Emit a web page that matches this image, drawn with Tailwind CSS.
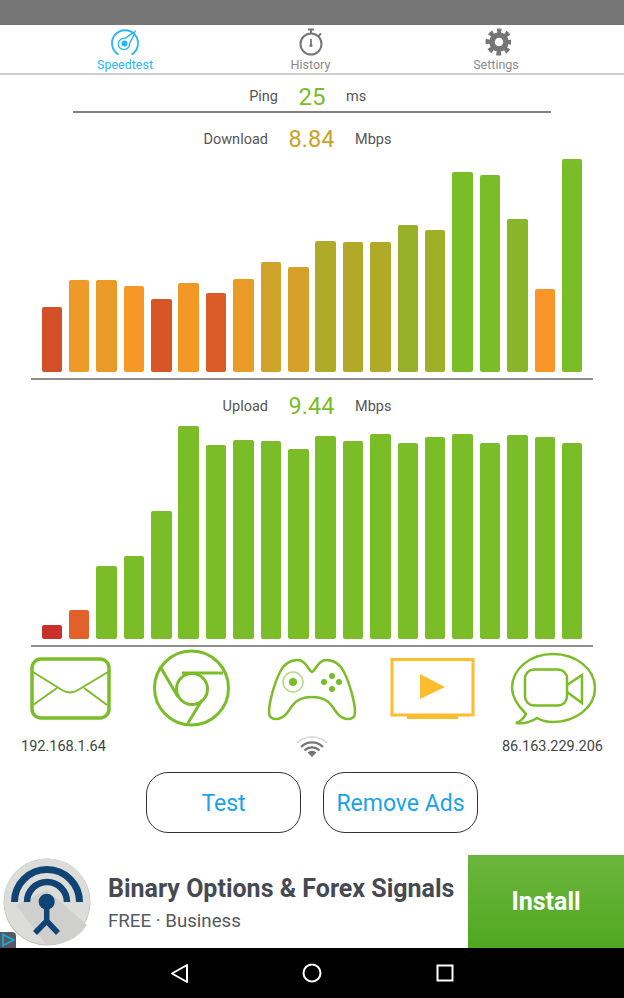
<!DOCTYPE html>
<html lang="en">
<head>
    <meta charset="UTF-8">
    <meta name="viewport" content="width=device-width, initial-scale=1.0">
    <title>Speedtest</title>
    <script src="https://cdn.jsdelivr.net/npm/@tailwindcss/browser@4"></script>
</head>
<body class="bg-white font-['Roboto',sans-serif]">
<div class="relative flex flex-col w-[624px] h-[998px] overflow-hidden bg-white">
    <!-- status bar -->
    <div class="h-[25px] bg-[#757575]"></div>

    <!-- tabs -->
    <div class="flex h-[50px] pl-[32px] border-b-2 border-[#cfcfcf] text-[12.5px] leading-[14px]">
        <div class="flex flex-col items-center w-[186px] pt-[3px] text-[#29b6f6]">
            <svg class="w-[30px] h-[29px]" viewBox="0 0 30 29" fill="none" stroke="#29b6f6">
                <path d="M8.5 26.5A13 13 0 1 1 21.5 26.5" stroke-width="1.8"/>
                <path d="M15 10.5C19 7.5 23 5 25 3.5C24 7 21.5 12 19.5 15.5A5.6 5.6 0 1 1 15 10.5Z" stroke-width="1.4"/>
                <circle cx="14.5" cy="15.5" r="3" fill="#29b6f6" stroke="none"/>
            </svg>
            <span class="mt-[1px]">Speedtest</span>
        </div>
        <div class="flex flex-col items-center w-[185px] pt-[3px] text-[#8a8a8a]">
            <svg class="w-[30px] h-[29px]" viewBox="0 0 30 29" fill="none" stroke="#757575">
                <circle cx="15" cy="16" r="10.5" stroke-width="2"/>
                <path d="M15 6V2M12 1.5H18M22.5 8L25 5.5" stroke-width="2"/>
                <path d="M15 11V17" stroke-width="1.8"/>
                <circle cx="15" cy="17.5" r="1.6" fill="#757575" stroke="none"/>
            </svg>
            <span class="mt-[1px]">History</span>
        </div>
        <div class="flex flex-col items-center w-[186px] pt-[3px] text-[#8a8a8a]">
            <svg class="w-[30px] h-[29px]" viewBox="0 0 30 29" fill="none" stroke="#757575">
                <circle cx="18" cy="14" r="7" stroke-width="5.5"/>
                <circle cx="18" cy="14" r="11" stroke-width="5" stroke-dasharray="4.6 4.04" transform="rotate(-90 18 14)" stroke-dashoffset="2.3"/>
            </svg>
            <span class="mt-[1px]">Settings</span>
        </div>
    </div>

    <!-- ping -->
    <div class="flex items-center h-[36px] pt-[8px] text-[14.5px] text-[#555555]">
        <span class="w-[278px] text-right">Ping</span>
        <span class="w-[68px] text-center text-[24px] text-[#7bbd28]">25</span>
        <span>ms</span>
    </div>
    <div class="h-[2px] mx-[73px] w-[478px] bg-[#808080]"></div>

    <!-- download -->
    <div class="flex items-center h-[37px] pt-[17px] text-[14.5px] text-[#555555]">
        <span class="w-[268px] text-right">Download</span>
        <span class="w-[87px] text-center text-[23.5px] text-[#c9a227]">8.84</span>
        <span>Mbps</span>
    </div>
    <div class="flex items-end justify-between h-[222px] ml-[41.5px] w-[541px]">
        <div class="w-[20.5px] h-[65.5px] rounded-[2px] bg-[#d34f27]"></div>
        <div class="w-[20.5px] h-[92px] rounded-[2px] bg-[#ec9a28]"></div>
        <div class="w-[20.5px] h-[92.5px] rounded-[2px] bg-[#ea9a27]"></div>
        <div class="w-[20.5px] h-[86px] rounded-[2px] bg-[#f69727]"></div>
        <div class="w-[20.5px] h-[73px] rounded-[2px] bg-[#d65627]"></div>
        <div class="w-[20.5px] h-[89px] rounded-[2px] bg-[#f39827]"></div>
        <div class="w-[20.5px] h-[79.5px] rounded-[2px] bg-[#dc5c28]"></div>
        <div class="w-[20.5px] h-[93.5px] rounded-[2px] bg-[#e99b28]"></div>
        <div class="w-[20.5px] h-[110px] rounded-[2px] bg-[#cfa22a]"></div>
        <div class="w-[20.5px] h-[105px] rounded-[2px] bg-[#d7a028]"></div>
        <div class="w-[20.5px] h-[131.5px] rounded-[2px] bg-[#afaa28]"></div>
        <div class="w-[20.5px] h-[130px] rounded-[2px] bg-[#b2a928]"></div>
        <div class="w-[20.5px] h-[130.5px] rounded-[2px] bg-[#b0aa28]"></div>
        <div class="w-[20.5px] h-[147.5px] rounded-[2px] bg-[#98b028]"></div>
        <div class="w-[20.5px] h-[142px] rounded-[2px] bg-[#a0af28]"></div>
        <div class="w-[20.5px] h-[200px] rounded-[2px] bg-[#7bbd28]"></div>
        <div class="w-[20.5px] h-[197px] rounded-[2px] bg-[#7bbd28]"></div>
        <div class="w-[20.5px] h-[153px] rounded-[2px] bg-[#8ab52a]"></div>
        <div class="w-[20.5px] h-[83px] rounded-[2px] bg-[#fc9527]"></div>
        <div class="w-[20.5px] h-[213px] rounded-[2px] bg-[#7bbd28]"></div>
    </div>
    <div class="h-[2px] mt-[6px] ml-[31px] w-[562px] bg-[#8f8f8f]"></div>

    <!-- upload -->
    <div class="flex items-center h-[40px] pt-[14px] text-[14.5px] text-[#555555]">
        <span class="w-[268px] text-right">Upload</span>
        <span class="w-[87px] text-center text-[23.5px] text-[#7bbd28]">9.44</span>
        <span>Mbps</span>
    </div>
    <div class="flex items-end justify-between h-[219px] ml-[41.5px] w-[541px]">
        <div class="w-[20.5px] h-[14px] rounded-[2px] bg-[#c9302c]"></div>
        <div class="w-[20.5px] h-[29px] rounded-[2px] bg-[#e2602a]"></div>
        <div class="w-[20.5px] h-[73px] rounded-[2px] bg-[#7bbd28]"></div>
        <div class="w-[20.5px] h-[83px] rounded-[2px] bg-[#7bbd28]"></div>
        <div class="w-[20.5px] h-[128px] rounded-[2px] bg-[#7bbd28]"></div>
        <div class="w-[20.5px] h-[213px] rounded-[2px] bg-[#7bbd28]"></div>
        <div class="w-[20.5px] h-[194px] rounded-[2px] bg-[#7bbd28]"></div>
        <div class="w-[20.5px] h-[199px] rounded-[2px] bg-[#7bbd28]"></div>
        <div class="w-[20.5px] h-[198px] rounded-[2px] bg-[#7bbd28]"></div>
        <div class="w-[20.5px] h-[190px] rounded-[2px] bg-[#7bbd28]"></div>
        <div class="w-[20.5px] h-[203px] rounded-[2px] bg-[#7bbd28]"></div>
        <div class="w-[20.5px] h-[198px] rounded-[2px] bg-[#7bbd28]"></div>
        <div class="w-[20.5px] h-[205px] rounded-[2px] bg-[#7bbd28]"></div>
        <div class="w-[20.5px] h-[196px] rounded-[2px] bg-[#7bbd28]"></div>
        <div class="w-[20.5px] h-[202px] rounded-[2px] bg-[#7bbd28]"></div>
        <div class="w-[20.5px] h-[205px] rounded-[2px] bg-[#7bbd28]"></div>
        <div class="w-[20.5px] h-[196px] rounded-[2px] bg-[#7bbd28]"></div>
        <div class="w-[20.5px] h-[204px] rounded-[2px] bg-[#7bbd28]"></div>
        <div class="w-[20.5px] h-[202px] rounded-[2px] bg-[#7bbd28]"></div>
        <div class="w-[20.5px] h-[196px] rounded-[2px] bg-[#7bbd28]"></div>
    </div>
    <div class="h-[2px] mt-[6px] ml-[31px] w-[562px] bg-[#8f8f8f]"></div>

    <!-- app icons, one drawing with the page's x/y so they line up -->
    <svg class="w-[624px] h-[80px]" viewBox="0 647 624 80" fill="none" stroke="#7bbd28">
        <rect x="32" y="659" width="77" height="59" rx="9" stroke-width="3.5"/>
        <path d="M33 672L62 690Q70 695 78 690L108 672M33 705L57 688M107 705L84 688" stroke-width="2"/>
        <circle cx="191.500" cy="688" r="37" stroke-width="3"/>
        <circle cx="192" cy="689" r="15.500" stroke-width="3"/>
        <path d="M161 668L178 697M182 673H223M202 700L188 723" stroke-width="3"/>
        <path d="M312 672C308 670 306 660 298 660C290 660 284 664 280 672C274 684 269 703 269 712C269 717 272 719 276 719C284 719 288 712 292 706C296 700 302 697 312 697C322 697 328 700 332 706C336 712 340 719 348 719C352 719 355 717 355 712C355 703 350 684 344 672C340 664 334 660 326 660C318 660 316 670 312 672Z" stroke-width="2.500"/>
        <circle cx="293" cy="682" r="10" stroke="#b5d98a" stroke-width="1.500"/>
        <circle cx="293" cy="682" r="4" fill="#7bbd28" stroke="none"/>
        <g fill="#7bbd28" stroke="none">
            <circle cx="332" cy="676" r="3"/>
            <circle cx="324" cy="682" r="3"/>
            <circle cx="339" cy="682" r="3"/>
            <circle cx="332" cy="689" r="3"/>
        </g>
        <rect x="392" y="659.500" width="81" height="55.500" stroke="#fdbd2c" stroke-width="3"/>
        <path d="M407 715H458V719H407ZM420 674L445 687L420 699Z" fill="#fdbd2c" stroke="none"/>
        <path d="M526 714C518 706 512 698 512 688C512 669 530 654 553 654C576 654 595 669 595 688C595 707 576 722 553 722C547 722 542 721 537 718C531 722 524 724 516 723C521 721 524 718 526 714Z" stroke-width="2.500"/>
        <rect x="525" y="669.500" width="42" height="36" rx="9" stroke-width="2.500"/>
        <path d="M567 685L582 675V703L567 692" stroke-width="2.500"/>
    </svg>

    <!-- addresses -->
    <div class="grid grid-cols-3 items-center h-[38px] px-[21px] text-[14.5px] text-[#444444]">
        <span class="pt-[2px]">192.168.1.64</span>
        <svg class="justify-self-center w-[34px] h-[24px]" viewBox="0 0 34 24" fill="none">
            <path d="M2 9A21 21 0 0 1 32 9" stroke="#d8d8d8" stroke-width="1.500"/>
            <path d="M6 13A15.500 15.500 0 0 1 28 13" stroke="#757575" stroke-width="2.200"/>
            <path d="M9.500 16.500A10.500 10.500 0 0 1 24.500 16.500" stroke="#757575" stroke-width="2.200"/>
            <path d="M17 23L12.500 18.500A6.400 6.400 0 0 1 21.500 18.500Z" fill="#757575"/>
        </svg>
        <span class="pt-[2px] text-right">86.163.229.206</span>
    </div>

    <!-- buttons -->
    <div class="flex justify-center gap-[22px] mt-[7px]">
        <button class="w-[155px] h-[61px] pt-[4px] rounded-[22px] border border-[#333333] text-[23px] text-[#1ba3e8]">Test</button>
        <button class="w-[155px] h-[61px] pt-[4px] rounded-[22px] border border-[#333333] text-[23px] text-[#1ba3e8]">Remove Ads</button>
    </div>

    <!-- ad -->
    <div class="relative flex h-[93px] mt-[22px]">
        <svg class="w-[94px] h-[93px]" viewBox="0 855 94 93" fill="none">
            <circle cx="47" cy="902" r="43.500" fill="#bdbdbb"/>
            <circle cx="47" cy="901.500" r="43" fill="#dcdcd9"/>
            <path d="M16 905L47 890L87 925A43 43 0 0 1 46 944.500Z" fill="#cfd0cd"/>
            <path d="M14.500 902A32.500 32.500 0 0 1 79.500 902" stroke="#0f4475" stroke-width="7"/>
            <path d="M27 902A20 20 0 0 1 67 902" stroke="#0f4475" stroke-width="6.500"/>
            <circle cx="46.700" cy="901.700" r="8" fill="#0f4475"/>
            <path d="M46.700 905V921M35 933L46.700 921L58 933" stroke="#0f4475" stroke-width="5.500"/>
        </svg>
        <div class="flex flex-col w-[374px] pl-[14px]">
            <span class="mt-[16px] text-[25px] leading-[36px] font-bold text-[#454a52] whitespace-nowrap">Binary Options &amp; Forex Signals</span>
            <span class="mt-[2px] text-[18.7px] leading-[24px] text-[#555a60]">FREE · Business</span>
        </div>
        <div class="flex items-center justify-center flex-1 bg-gradient-to-b from-[#6cb53d] to-[#4fa81f] text-[25px] font-bold text-white">Install</div>
        <div class="absolute left-0 bottom-0 flex items-center justify-center w-[16px] h-[16px] rounded-tr-[4px] bg-[#555a60]">
            <svg class="w-[14px] h-[14px]" viewBox="0 0 14 14" fill="none">
                <path d="M2 1.500L12.500 7L2 12.500Z" stroke="#1ba8d8" stroke-width="1.800"/>
            </svg>
        </div>
    </div>

    <!-- nav bar -->
    <div class="h-[50px] bg-black">
        <svg class="w-[624px] h-[50px]" viewBox="0 948 624 50" fill="none" stroke="#ffffff" stroke-width="2">
            <path d="M187 965V982L172 973.500Z" stroke-linejoin="round"/>
            <circle cx="312" cy="973" r="8.500"/>
            <rect x="437.500" y="965.500" width="15" height="15"/>
        </svg>
    </div>
</div>
</body>
</html>
